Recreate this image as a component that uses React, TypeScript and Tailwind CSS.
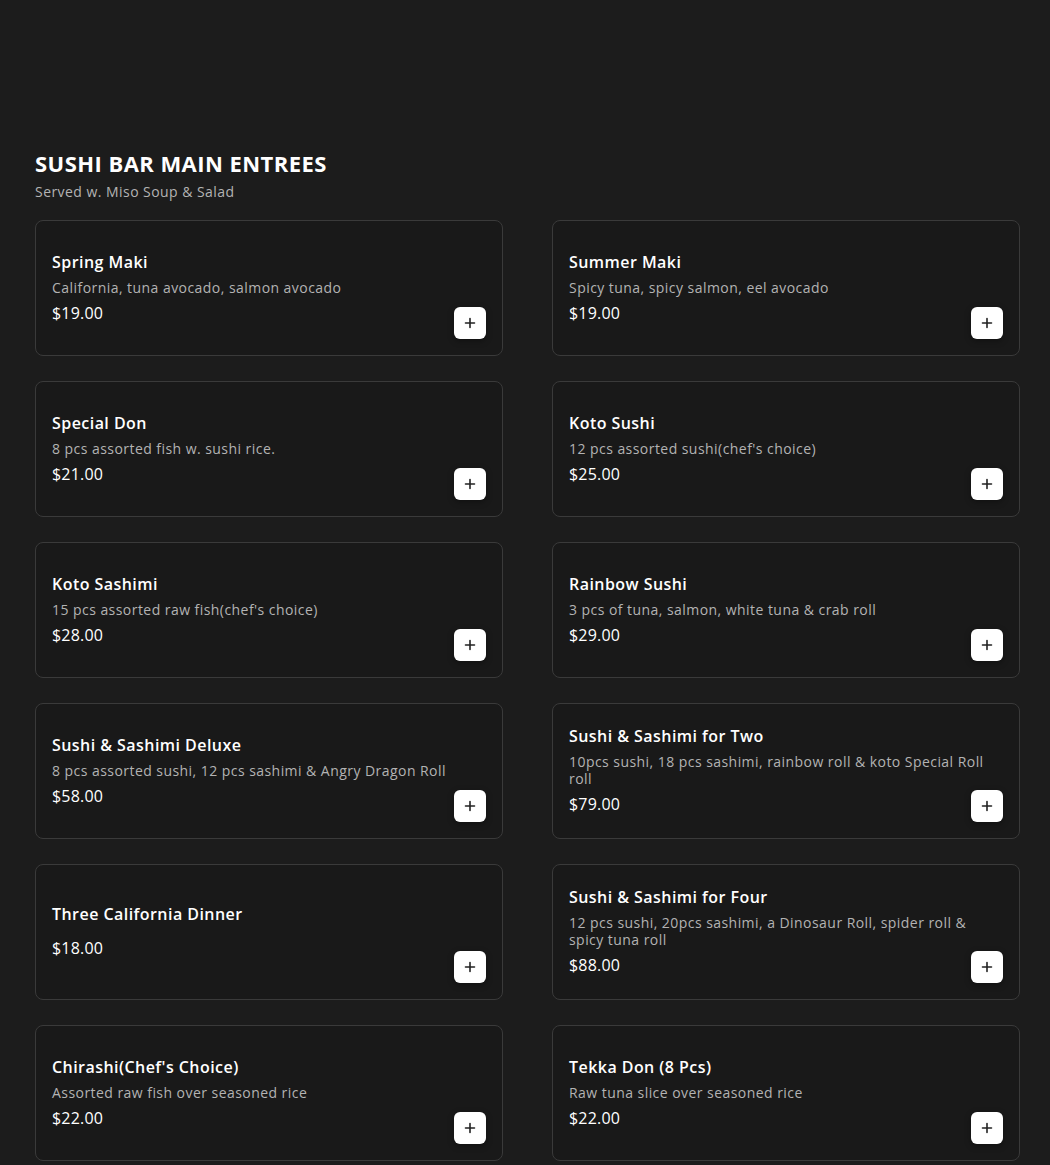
import React from "react";

type Item = { name: string; desc: string; price: string };

const items: Item[] = [
  { name: "Spring Maki", desc: "California, tuna avocado, salmon avocado", price: "$19.00" },
  { name: "Summer Maki", desc: "Spicy tuna, spicy salmon, eel avocado", price: "$19.00" },
  { name: "Special Don", desc: "8 pcs assorted fish w. sushi rice.", price: "$21.00" },
  { name: "Koto Sushi", desc: "12 pcs assorted sushi(chef's choice)", price: "$25.00" },
  { name: "Koto Sashimi", desc: "15 pcs assorted raw fish(chef's choice)", price: "$28.00" },
  { name: "Rainbow Sushi", desc: "3 pcs of tuna, salmon, white tuna & crab roll", price: "$29.00" },
  { name: "Sushi & Sashimi Deluxe", desc: "8 pcs assorted sushi, 12 pcs sashimi & Angry Dragon Roll", price: "$58.00" },
  { name: "Sushi & Sashimi for Two", desc: "10pcs sushi, 18 pcs sashimi, rainbow roll & koto Special Roll roll", price: "$79.00" },
  { name: "Three California Dinner", desc: "", price: "$18.00" },
  { name: "Sushi & Sashimi for Four", desc: "12 pcs sushi, 20pcs sashimi, a Dinosaur Roll, spider roll & spicy tuna roll", price: "$88.00" },
  { name: "Chirashi(Chef's Choice)", desc: "Assorted raw fish over seasoned rice", price: "$22.00" },
  { name: "Tekka Don (8 Pcs)", desc: "Raw tuna slice over seasoned rice", price: "$22.00" },
];

function Card({ item }: { item: Item }) {
  return (
    <div className="relative flex h-[136px] items-center rounded-[8px] border border-[#3a3a3a] bg-[#191919] px-4">
      <div className="-mt-[2px] flex w-full flex-col pr-[14px]">
        <div className="text-[16px] font-semibold leading-[24px] tracking-[0.45px] text-white">{item.name}</div>
        <div className="mt-[5px] text-[14px] leading-[17px] tracking-[0.45px] text-[#b3b3b3]">{item.desc}</div>
        <div className="mt-[5px] text-[16px] leading-[24px] tracking-[0.2px] text-white">{item.price}</div>
      </div>
      <button className="absolute bottom-[16px] right-4 flex h-8 w-8 items-center justify-center rounded-[6px] bg-white shadow-[0_2px_6px_rgba(0,0,0,0.35)]">
        <svg width="12" height="12" viewBox="0 0 12 12" fill="none">
          <path d="M6 1.5v9M1.5 6h9" stroke="#222" strokeWidth="1.6" strokeLinecap="round" />
        </svg>
      </button>
    </div>
  );
}

export default function App() {
  return (
    <div
      className="min-h-[1165px] w-full bg-[#1c1c1c] pl-[35px] pr-[30px] pt-[149px]"
      style={{ fontFamily: "'Open Sans', 'Noto Sans', sans-serif" }}
    >
      <h1 className="text-[22px] font-bold leading-[28px] tracking-[0.45px] text-white">SUSHI BAR MAIN ENTREES</h1>
      <p className="mt-[5px] text-[14px] leading-[20px] tracking-[0.45px] text-[#b3b3b3]">Served w. Miso Soup &amp; Salad</p>
      <div className="mt-[18px] grid grid-cols-2 gap-x-[49px] gap-y-[25px] pb-8">
        {items.map((it) => (
          <Card key={it.name} item={it} />
        ))}
      </div>
    </div>
  );
}
